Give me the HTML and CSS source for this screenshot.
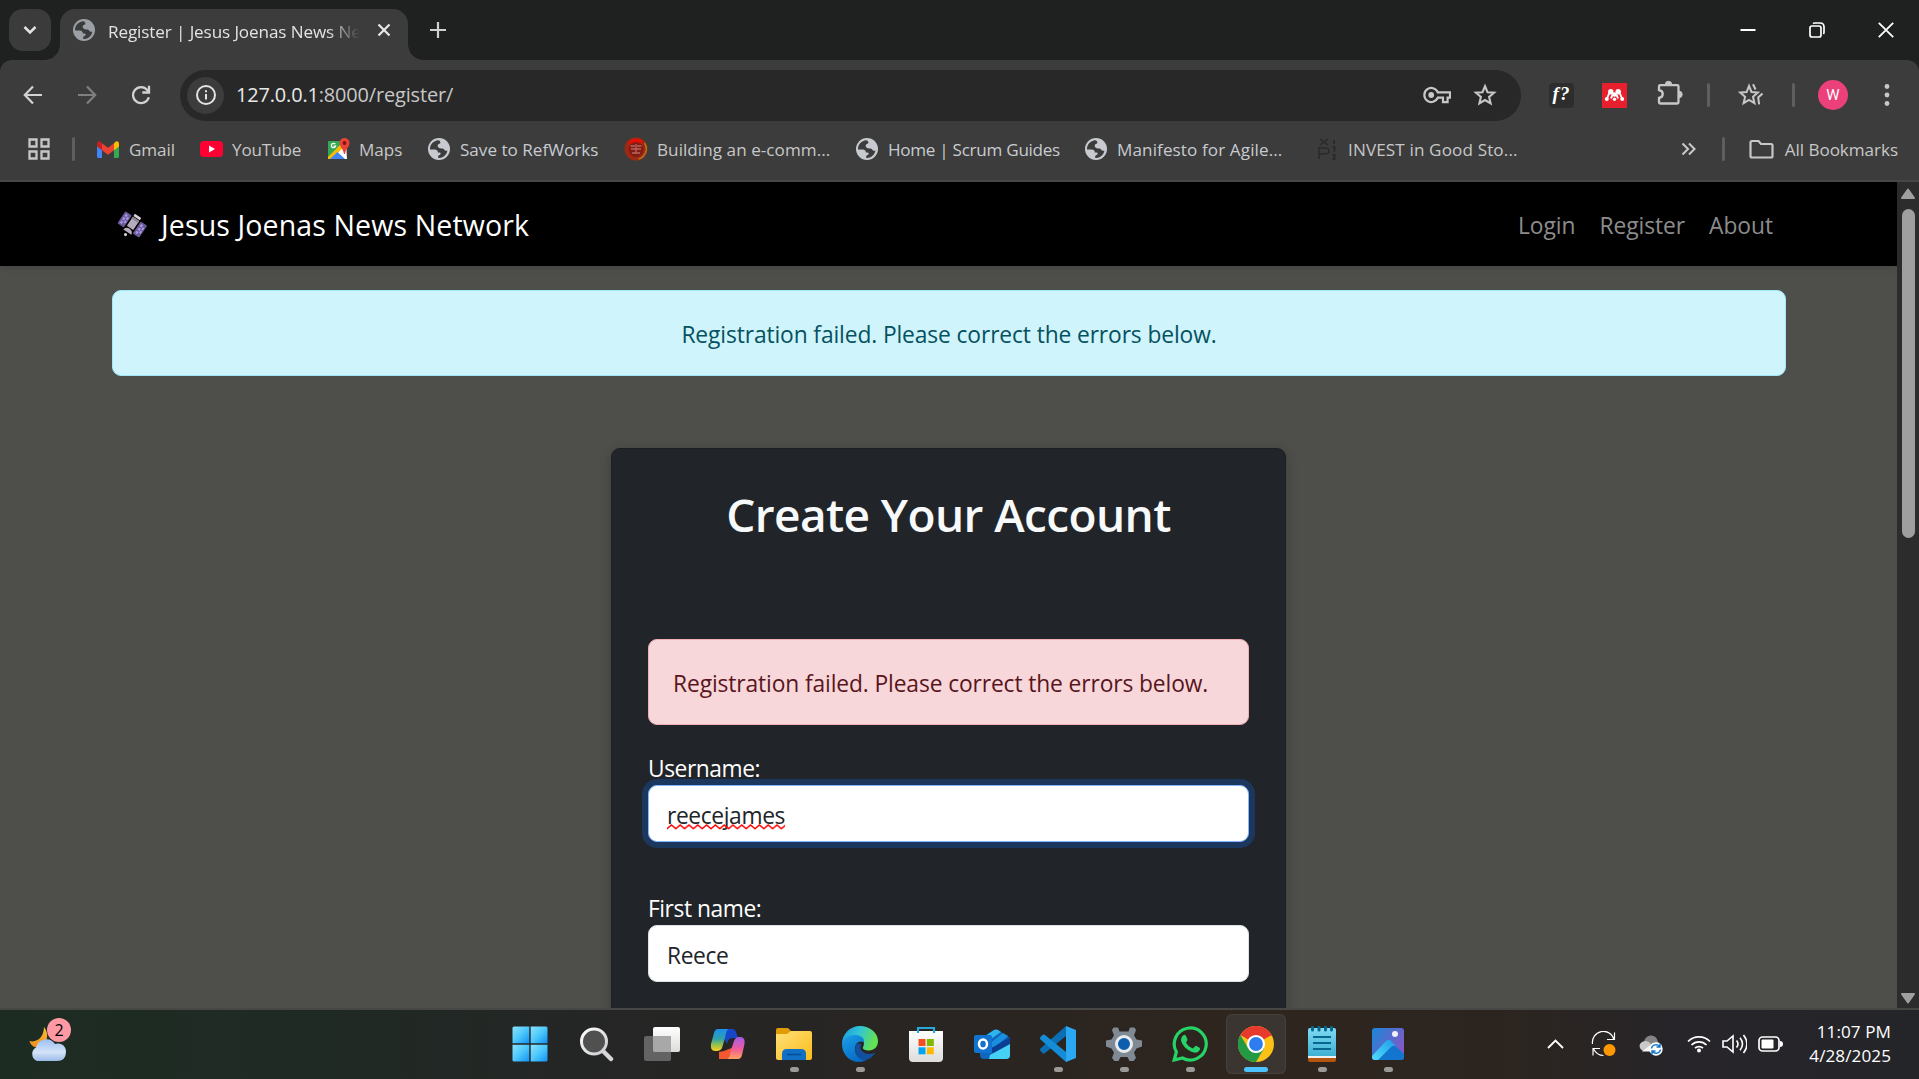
FILE: index.html
```html
<!DOCTYPE html>
<html lang="en">
<head>
<meta charset="utf-8">
<title>Register | Jesus Joenas News Network</title>
<link rel="stylesheet" href="styles.css">
</head>
<body>
<svg class="defs" width="0" height="0" aria-hidden="true">
  <defs>
    <symbol id="globe" viewBox="0 0 22 22">
      <circle cx="11" cy="11" r="11" fill="currentColor"/>
      <path d="M10.2 2.2C5.6 2.6 2 6.4 2 11l0 .6c.9-.2 2.6-.2 4.6-.1 2.300.2 3.400 1.300 3.200 2.900l1.700.1c1.300.2 1.600 1.200.7 2.100-.8.8-1.900.8-2 1.900v1.400c4.300.500 8.600-2.700 9.200-7.400-1.400.6-2.600 0-3.300-1.100-.5-.9-1.200-1-2.500-1-2.900 0-4-1.100-3.900-2.900 0-1.300 1.300-1.800 2.300-2.100.8-.3.200-1.700-.1-2.200-.3-.500-.900-.900-1.700-1z" fill="var(--land)"/>
    </symbol>
    <linearGradient id="win" x1="0" y1="0" x2="1" y2="1"><stop offset="0" stop-color="#8be3ff"/><stop offset=".5" stop-color="#4cc8fb"/><stop offset="1" stop-color="#1191f5"/></linearGradient>
    <linearGradient id="lens" x1="0" y1="0" x2="1" y2="1"><stop offset="0" stop-color="#fff"/><stop offset="1" stop-color="#c9c9cf"/></linearGradient>
    <linearGradient id="copL" x1="0" y1="0" x2="0" y2="1"><stop offset="0" stop-color="#1d8fec"/><stop offset=".45" stop-color="#2fa0ac"/><stop offset=".7" stop-color="#8cc152"/><stop offset="1" stop-color="#ffce1f"/></linearGradient>
    <linearGradient id="copR" x1="0" y1="0" x2="0" y2="1"><stop offset="0" stop-color="#a55be8"/><stop offset=".55" stop-color="#ee5c9c"/><stop offset="1" stop-color="#ffa35c"/></linearGradient>
    <linearGradient id="fold" x1="0" y1="0" x2="1" y2="1"><stop offset="0" stop-color="#ffe07a"/><stop offset="1" stop-color="#fcbc19"/></linearGradient>
    <linearGradient id="edgeTop" x1="0" y1="0" x2="1" y2=".3"><stop offset="0" stop-color="#1796e0"/><stop offset=".5" stop-color="#32c5d5"/><stop offset="1" stop-color="#64e253"/></linearGradient>
    <linearGradient id="edgeLow" x1="0" y1="0" x2=".6" y2="1"><stop offset="0" stop-color="#1ba0e8"/><stop offset="1" stop-color="#0669c4"/></linearGradient>
    <linearGradient id="bag" x1="0" y1="0" x2="0" y2="1"><stop offset="0" stop-color="#fff"/><stop offset="1" stop-color="#dcdcdc"/></linearGradient>
    <linearGradient id="note" x1="0" y1="0" x2="0" y2="1"><stop offset="0" stop-color="#7fdbf3"/><stop offset="1" stop-color="#3fb0d3"/></linearGradient>
    <linearGradient id="sky" x1="0" y1="0" x2="1" y2=".6"><stop offset="0" stop-color="#1a86da"/><stop offset="1" stop-color="#8259c4"/></linearGradient>
    <linearGradient id="hill" x1="0" y1="1" x2="1" y2="0"><stop offset="0" stop-color="#53dcf9"/><stop offset="1" stop-color="#1c9ceb"/></linearGradient>
    <linearGradient id="cloud" x1="0" y1="0" x2="0" y2="1"><stop offset="0" stop-color="#9dc0f5"/><stop offset=".6" stop-color="#d3e3f8"/><stop offset="1" stop-color="#9bbbe9"/></linearGradient>
    <linearGradient id="moon" x1="0" y1="0" x2="0" y2="1"><stop offset="0" stop-color="#fbc531"/><stop offset="1" stop-color="#f08a1c"/></linearGradient>
  </defs>
</svg>

<div class="screen">
  <header class="browser">
    <div class="tabstrip">
      <button class="tab-search" aria-label="Search tabs"><svg width="16" height="12" viewBox="0 0 16 12"><path d="M2.500 3l5.500 5.500L13.500 3" fill="none" stroke="#e3e3e3" stroke-width="2.500"/></svg></button>
      <div class="tab">
        <svg class="tab-globe" width="22" height="22"><use href="#globe"/></svg>
        <span class="tab-title">Register | Jesus Joenas News Network</span>
        <svg class="tab-close" width="14" height="14" viewBox="0 0 14 14"><path d="M1.500 1.500l11 11M12.500 1.500l-11 11" stroke="#e8e8e8" stroke-width="2.200"/></svg>
      </div>
      <svg class="new-tab" width="16" height="16" viewBox="0 0 16 16"><path d="M8 0v16M0 8h16" stroke="#d0d0d0" stroke-width="2.200"/></svg>
      <div class="window-buttons">
        <svg width="16" height="16" viewBox="0 0 16 16"><path d="M.5 8h15" stroke="#fff" stroke-width="2"/></svg>
        <svg width="16" height="16" viewBox="0 0 16 16" fill="none" stroke="#fff" stroke-width="1.700"><rect x="1" y="4" width="11" height="11" rx="2"/><path d="M4 1.500Q4.600 1 6 1h5q4 0 4 4v5q0 1.400-.6 2"/></svg>
        <svg width="16" height="16" viewBox="0 0 16 16"><path d="M.8.8l14.400 14.400M15.200.8L.8 15.200" stroke="#fff" stroke-width="1.800"/></svg>
      </div>
    </div>

    <div class="toolbar">
      <div class="nav-buttons">
        <svg width="20" height="20" viewBox="0 0 20 20" fill="none" stroke="#d2d2d2" stroke-width="2.200"><path d="M19 10H2M10 1.500L1.800 10l8.200 8.500"/></svg>
        <svg width="20" height="20" viewBox="0 0 20 20" fill="none" stroke="#7f7f7f" stroke-width="2.200"><path d="M1 10h17M10 1.500l8.200 8.500-8.200 8.500"/></svg>
        <svg width="20" height="20" viewBox="0 0 20 20" fill="none" stroke="#d2d2d2" stroke-width="2.300"><path d="M17.800 12.200A8 8 0 1 1 16.300 5L18 7.300"/><path d="M18 .8v6.700h-6.700"/></svg>
      </div>
      <div class="omnibox">
        <span class="site-info"><svg width="20" height="20" viewBox="0 0 20 20" fill="none" stroke="#e3e3e3" stroke-width="2"><circle cx="10" cy="10" r="9"/><path d="M10 9v5.500M10 5.300v2"/></svg></span>
        <span class="url"><b>127.0.0.1</b>:8000/register/</span>
        <svg class="key" width="28" height="18" viewBox="0 0 28 18" fill="none" stroke="#c7c7c7" stroke-width="2.200"><path d="M14.800 6.300A7 7 0 1 0 14.800 11.700H20v4.500h4.600v-4.500H27V6.300z"/><circle cx="8.200" cy="9" r="2.900" fill="#c7c7c7" stroke="none"/></svg>
        <svg width="24" height="24" viewBox="0 0 24 24" fill="none" stroke="#c7c7c7" stroke-width="2.100"><path d="M12 3.200l2.500 6 6.600.5-5 4.300 1.500 6.400L12 17l-5.600 3.400L7.900 14l-5-4.300 6.600-.5z"/></svg>
      </div>
      <div class="extensions">
        <span class="ext-f">f?</span>
        <svg class="ext-red" width="25" height="25" viewBox="0 0 25 25"><path fill="#e8202e" d="M0 0h25v25H0z"/><g fill="#fff"><circle cx="8.800" cy="8.800" r="2.700"/><circle cx="16.200" cy="8.800" r="2.700"/><circle cx="12.500" cy="11.500" r="2.200"/><circle cx="4.800" cy="16" r="2"/><circle cx="12.500" cy="16.300" r="1.700"/><circle cx="20.200" cy="16" r="2"/></g><path d="M4.800 16l2.700-6.500M20.200 16l-2.700-6.500M9 15.500l1.500-4M16 15.500l-1.500-4" stroke="#fff" stroke-width="1.900"/></svg>
        <svg class="ext-puzzle" width="26" height="26" viewBox="0 0 26 26"><path d="M4 5.200h16.200q1.300 0 1.300 1.300v15.700q0 1.300-1.300 1.300H3.300q-1.300 0-1.300-1.300V18c5-1 5-7 0-8V6.500q0-1.300 1.300-1.300z" fill="none" stroke="#c7c7c7" stroke-width="2.300"/><path d="M8.300 4.500a3.200 3.200 0 0 1 6.400 0zM22 11.200a3.200 3.200 0 0 1 0 6.400z" fill="#c7c7c7" stroke="#c7c7c7"/></svg>
        <i class="sep"></i>
        <svg class="fav-star" width="28" height="26" viewBox="0 0 28 26" fill="none" stroke="#c7c7c7" stroke-width="2"><path d="M12 4l2.500 6 6.300.6-4.800 4.200 1.500 6.400L12 18l-5.400 3.200 1.500-6.400-4.900-4.200 6.400-.6z"/><path d="M16 2.200l2.600 5.300M25.500 11.500l-4.300 4 .9 6.800"/></svg>
        <i class="sep"></i>
        <span class="avatar">W</span>
        <svg class="menu-dots" width="6" height="26" viewBox="0 0 6 26" fill="#c7c7c7"><circle cx="3" cy="4.500" r="2.400"/><circle cx="3" cy="13" r="2.400"/><circle cx="3" cy="21.500" r="2.400"/></svg>
      </div>
    </div>

    <nav class="bookmarks">
      <svg width="22" height="22" viewBox="0 0 22 22" fill="none" stroke="#c7c7c7" stroke-width="2.300"><path d="M1.500 1.500h7v7h-7zM13.500 1.500h7v7h-7zM1.500 13.500h7v7h-7zM13.500 13.500h7v7h-7z"/></svg>
      <i class="sep"></i>
      <span class="bm gmail"><svg width="22" height="17" viewBox="0 0 22 17"><path fill="#4285f4" d="M0 3h5v14H1.500Q0 17 0 15.500z"/><path fill="#34a853" d="M17 3h5v12.500q0 1.500-1.500 1.500H17z"/><path fill="#fbbc04" d="M17 2.200Q19-.5 21 .6q1 .6 1 2.400v2.500l-5 3.800z"/><path fill="#c5221f" d="M0 5.500V3Q0 1.200 1 .6 3-.5 5 2.200v7.100z"/><path fill="#ea4335" d="M5 9.300V2.200l6 4.600 6-4.600v7.100l-6 4.500z"/></svg><span>Gmail</span></span>
      <span class="bm youtube"><svg width="23" height="16" viewBox="0 0 23 16"><rect width="23" height="16" rx="4" fill="#ff0033"/><path fill="#fff" d="M9 4.500l6 3.500-6 3.500z"/></svg><span>YouTube</span></span>
      <span class="bm maps"><svg width="23" height="22" viewBox="0 0 23 22"><path fill="#34a853" d="M1 3h19v10L8 21H1z"/><path fill="#fff" d="M2 21L19 5l1 16z"/><path fill="#fbbc04" d="M1 19L14 6l3 3L4 21H1z"/><path fill="#4285f4" d="M3 21l7.500-7 7.500 7z"/><path d="M8.300 6.200a2.200 2.200 0 1 0 .3 2H6.500" fill="none" stroke="#fff" stroke-width="1.200"/><path fill="#ea4335" d="M17.500 0a5 5 0 0 1 5 5c0 4-3.500 5-4.500 11h-1c-1-6-4.500-7-4.500-11a5 5 0 0 1 5-5z"/><circle cx="17.500" cy="5" r="1.900" fill="#811411"/></svg><span>Maps</span></span>
      <span class="bm refworks"><svg width="22" height="22"><use href="#globe"/></svg><span>Save to RefWorks</span></span>
      <span class="bm building"><svg width="24" height="24" viewBox="0 0 24 24"><circle cx="12" cy="12" r="11.500" fill="#9c2a12"/><path d="M3.500 6a10.500 10.500 0 0 1 16-1.500L12 9z" fill="#e01208"/><path d="M20.500 6a10.500 10.500 0 0 1-6 16" fill="none" stroke="#b8741c" stroke-width="1.500"/><circle cx="12" cy="12.500" r="7.500" fill="#861a14"/><path d="M6.500 9h4.500M13 9h4.500M7 12h10M8 16h8M12 7v9" stroke="#b5685e" stroke-width="1.300"/></svg><span>Building an e-comm...</span></span>
      <span class="bm scrum"><svg width="22" height="22"><use href="#globe"/></svg><span>Home | Scrum Guides</span></span>
      <span class="bm manifesto"><svg width="22" height="22"><use href="#globe"/></svg><span>Manifesto for Agile...</span></span>
      <span class="bm invest"><svg width="18" height="22" viewBox="0 0 18 22" fill="none" stroke="#2a2a2a" stroke-width="1.500"><path d="M2 1l8 6M10 1L2 7M1 9v12M1 10h6q4 0 4 3t-4 3H1"/><path d="M16 2v4M14.500 9h2v5M14.500 17h2v4h-2" stroke-width="2"/></svg><span>INVEST in Good Sto...</span></span>
      <svg class="more" width="15" height="14" viewBox="0 0 15 14" fill="none" stroke="#c7c7c7" stroke-width="2.100"><path d="M1.500 1.500L7 7l-5.500 5.500M8 1.500L13.500 7 8 12.500"/></svg>
      <i class="sep"></i>
      <span class="bm all"><svg width="25" height="20" viewBox="0 0 25 20" fill="none" stroke="#c7c7c7" stroke-width="2.200"><path d="M3 2h6.500l2.500 3h10q1.500 0 1.500 1.500v10.500q0 1.500-1.500 1.500H3Q1.500 18.500 1.500 17V3.500Q1.500 2 3 2z"/></svg><span>All Bookmarks</span></span>
    </nav>
  </header>

  <div class="viewport">
    <div class="page">
      <nav class="navbar">
        <svg class="satellite" width="32" height="30" viewBox="0 0 32 30">
          <g transform="translate(1.500 1) rotate(34 16 15) scale(.9)">
            <rect x="1.500" y="6.500" width="8.500" height="16" rx="1" fill="#6c5a96"/><rect x="22" y="6.500" width="8.500" height="16" rx="1" fill="#6c5a96"/>
            <g fill="#a695e8"><path d="M3.500 8.500H6v3H3.500zM3.500 13H6v3H3.500zM3.500 17.500H6v3H3.500zM6.700 10.500H9v3H6.700zM6.700 15H9v3H6.700zM24 8.500h2.500v3H24zM24 13h2.500v3H24zM24 17.500h2.500v3H24zM27.200 10.500h2.300v3h-2.300zM27.200 15h2.300v3h-2.300z"/></g>
            <path fill="#b5acbb" d="M11.800 7h8.500v12h-8.500z"/><path fill="#d8d1dc" d="M11.800 3h8.500v3h-8.500z"/><path fill="#8f8598" d="M11.800 7h8.500v2.500h-8.500z"/>
            <path fill="#b5acbb" d="M11 24.500a5.200 4.500 0 0 1 10.400 0z"/><circle cx="16" cy="28" r="1.700" fill="#d8d1dc"/>
          </g>
        </svg>
        <a class="brand">Jesus Joenas News Network</a>
        <div class="links"><a>Login</a><a>Register</a><a>About</a></div>
      </nav>
      <main class="container">
        <div class="alert alert-info">Registration failed. Please correct the errors below.</div>
        <section class="card">
          <h1>Create Your Account</h1>
          <div class="alert alert-danger">Registration failed. Please correct the errors below.</div>
          <div class="field"><label>Username:</label><div class="input focused"><span class="misspelt">reecejames<svg class="squiggle" width="118" height="6"><defs><pattern id="wave" width="8.800" height="6" patternUnits="userSpaceOnUse"><path d="M-1 5.600L0 4.700 4.400 1l4.400 3.700 1 .9" fill="none" stroke="#f00" stroke-width="1.500"/></pattern></defs><rect width="118" height="6" fill="url(#wave)"/></svg></span></div></div>
          <div class="field"><label>First name:</label><div class="input">Reece</div></div>
        </section>
      </main>
    </div>
    <div class="scrollbar">
      <svg width="16" height="12" viewBox="0 0 16 12"><path d="M8 1.500L14 10H2z" fill="#9f9f9f" stroke="#9f9f9f" stroke-width="2" stroke-linejoin="round"/></svg>
      <div class="thumb"></div>
      <svg class="down" width="16" height="12" viewBox="0 0 16 12"><path d="M8 10.500L14 2H2z" fill="#9f9f9f" stroke="#9f9f9f" stroke-width="2" stroke-linejoin="round"/></svg>
    </div>
  </div>

  <footer class="taskbar">
    <div class="weather">
      <svg width="38" height="38" viewBox="0 0 38 38"><path d="M15 2c5 6 4 15-2 19-5 3-11 1-12.500-5C8 18 15 12 15 2z" fill="url(#moon)"/><path d="M8 36a7.500 7.500 0 0 1-1-13.500A10.500 10.500 0 0 1 26 19a8 8 0 0 1 11 7.500q0 9.500-9 9.500z" fill="url(#cloud)"/></svg>
      <span class="count">2</span>
    </div>
    <div class="apps">
      <span class="app"><svg width="36" height="36" viewBox="0 0 36 36"><g fill="url(#win)"><path d="M2 .5h15.300v16.800H.5V2Q.5.500 2 .5z"/><path d="M18.700.5H34q1.500 0 1.500 1.500v15.300H18.700z"/><path d="M.5 18.700h16.800v16.800H2Q.5 35.500.5 34z"/><path d="M18.700 18.700h16.800V34q0 1.500-1.500 1.500H18.700z"/></g></svg></span>
      <span class="app"><svg width="36" height="36" viewBox="0 0 36 36"><path d="M25 25l8 8" stroke="#d5d5da" stroke-width="4.500" stroke-linecap="round"/><circle cx="16" cy="15.500" r="12.500" fill="#505050" stroke="url(#lens)" stroke-width="3"/></svg></span>
      <span class="app"><svg width="36" height="36" viewBox="0 0 36 36"><rect x="9" y="1" width="27" height="25" rx="2" fill="url(#bag)"/><rect x="0" y="10" width="27" height="25" rx="2" fill="#6f6f6f" fill-opacity=".85"/><path d="M9 10h18v16H11q-2 0-2-2z" fill="#a8a8a8"/></svg></span>
      <span class="app"><svg width="36" height="36" viewBox="0 0 36 36"><path d="M9 3h13q3 0 4 3l2 6h-4c-5 0-6 2-7 6z" fill="#1747c9"/><path d="M9 33h14q3 0 4-3l-3-9-10 4-5 1z" fill="#f4582f"/><path d="M8 3h11c-3 1-3 5-4 9l-3 10q-1.500 3-5 3H5q-5 0-4-7L4 7q1-4 4-4z" fill="url(#copL)"/><path d="M28 33H17c3-1 3-5 4-9l3-9q1.500-4 5-4h2q4.500 1 3.500 7L32 29q-1 4-4 4z" fill="url(#copR)"/></svg></span>
      <span class="app"><svg width="36" height="36" viewBox="0 0 36 36"><path d="M0 4q0-2 2-2h10l4 4-4 6H0z" fill="#e09b06"/><path d="M0 8h11l4-3h19q2 0 2 2v25q0 2-2 2H2q-2 0-2-2z" fill="url(#fold)"/><path d="M6 34V28q0-5 5-5h14q5 0 5 5v6z" fill="#0f70c5"/><path d="M11 28.500h14" stroke="#064f96" stroke-width="1.700"/></svg><i class="dot"></i></span>
      <span class="app"><svg width="36" height="36" viewBox="0 0 36 36"><path d="M18 0c10 0 18 7 18 15 0 6-4 9.500-9 9.500-4 0-7-1.500-6-3.500 3-5-1-10-7-10C8 11 3 14 0 18 0 8 8 0 18 0z" fill="url(#edgeTop)"/><path d="M13 9c6-.5 10 4 9 7-5-2-9 1-9 7 0 8 7 12 13 10-3 2-6 3-9 3C7 36 0 28 0 18 2 12 7 9 13 9z" fill="url(#edgeLow)"/><path d="M14.500 18c-4 8 2 18 11 15.500 3-1 6-4 8-7-4 2-10 2-13-1-2-2-3-4-1-7-1-1-3-1.500-5-.5z" fill="#10509f"/></svg><i class="dot"></i></span>
      <span class="app"><svg width="36" height="36" viewBox="0 0 36 36"><path d="M1 5h34v27q0 4-4 4H5q-4 0-4-4z" fill="url(#bag)"/><path d="M10 7V2h16v5" fill="none" stroke="#27a8dc" stroke-width="2.200"/><path fill="#f25022" d="M10.500 13h7v7h-7z"/><path fill="#7fba00" d="M18.800 13h7v7h-7z"/><path fill="#00a4ef" d="M10.500 21.300h7v7h-7z"/><path fill="#ffb900" d="M18.800 21.300h7v7h-7z"/></svg></span>
      <span class="app"><svg width="36" height="36" viewBox="0 0 36 36"><path d="M6 13L20 4q2-1 4 0l12 8v17q0 4-4 4H10q-4 0-4-4z" fill="#1066bd"/><path d="M8 12L20 4q2-1 4 0l3 2-13 9z" fill="#2db4ea"/><path d="M14 19L29 7l5 3-14 12z" fill="#1a8fe0"/><path d="M16 23l20-12v8L20 29z" fill="#0a3f94"/><path d="M15 33l1-4 20-11v11q0 4-4 4z" fill="#45d0f5"/><rect y="9" width="18" height="18" rx="2" fill="#1173cf"/><ellipse cx="9" cy="18" rx="4" ry="4.600" fill="none" stroke="#fff" stroke-width="2.500"/></svg></span>
      <span class="app"><svg width="36" height="36" viewBox="0 0 36 36"><path d="M26 0L36 4v28l-10 4z" fill="#2aa9f2"/><path d="M26 0v10L5 27q-1.500 1-2.600 0L.5 25q-1-1.500 0-2.500z" fill="#0a6fb5"/><path d="M26 36V26L5 9Q3.500 8 2.400 9L.5 11q-1 1.500 0 2.500z" fill="#148cd6"/></svg><i class="dot"></i></span>
      <span class="app"><svg width="36" height="36" viewBox="0 0 36 36"><path d="M13.500 5.500L12 1.500H7.500L6 4l2 5.500-2.500 4L0 14.500v6l5.500 2 2.500 4L6 32l2.500 3h4l2-4h7l2 4h4l2.500-3-2-5.500 2.500-4 5.500-2v-6l-5.500-1-2.500-4L30 4l-1.500-2.500H24l-1.500 4z" fill="#7f8a94"/><circle cx="18" cy="18" r="7.500" fill="#0d5fae" stroke="#e9ebee" stroke-width="3"/></svg><i class="dot"></i></span>
      <span class="app"><svg width="36" height="36" viewBox="0 0 36 36"><path d="M2.200 34l2.200-8A16 16 0 1 1 10.500 32z" fill="none" stroke="#25d366" stroke-width="3.200"/><path d="M11 9.500q2-1.500 3 .5l1.500 3.500q0 1-1.500 3 2.500 4.500 7 6l2-2.200q.7-.7 1.600-.2l3 1.600q.8.5.4 1.600-1.600 4-6 3.200C15 25 9.500 18.500 9 14q0-3 2-4.500z" fill="#25d366"/></svg><i class="dot"></i></span>
      <span class="app active"><svg width="36" height="36" viewBox="0 0 36 36"><circle cx="18" cy="18" r="18" fill="#fbc116"/><path d="M18 18L2.400 9A18 18 0 0 1 33.600 9z" fill="#e8392e"/><path d="M18 18v18A18 18 0 0 1 2.400 9l8 13.500z" fill="#249a45"/><path d="M18 36l8-13.500L18 18l-7.800 4.500z" fill="#249a45"/><path d="M18 9h15.600v1H18z" fill="#e8392e"/><circle cx="18" cy="18" r="8" fill="#2d7cf0" stroke="#fff" stroke-width="2.200"/></svg><i class="dot"></i></span>
      <span class="app"><svg width="36" height="36" viewBox="0 0 36 36"><path d="M4 30h28v4q0 2-2 2H6q-2 0-2-2z" fill="#b4560f"/><path d="M4 28h28v4H4z" fill="#f0f0f0"/><path d="M4 4q0-2 2-2h24q2 0 2 2v26H4z" fill="url(#note)"/><path d="M9 11h18M9 17h18M9 23h18" stroke="#06668e" stroke-width="1.900"/><path d="M8.500 1v3M15 1v3M21.500 1v3M27.500 1v3" stroke="#06668e" stroke-width="3" stroke-linecap="round"/></svg><i class="dot"></i></span>
      <span class="app"><svg width="36" height="36" viewBox="0 0 36 36"><rect x="2" y="2" width="32" height="32" rx="3" fill="url(#sky)"/><path d="M3 33l15-16q2-2 4 0l12 11v3q0 3-3 3H5q-1.500 0-2-1z" fill="#1276cf"/><path d="M2 30L16 15q2.500-2.500 5 0l5 5q-3-1-5 1L8 34H5q-3 0-3-3z" fill="url(#hill)"/><circle cx="25" cy="8" r="3" fill="#f0f0fa"/></svg><i class="dot"></i></span>
    </div>
    <div class="tray">
      <svg width="17" height="10" viewBox="0 0 17 10"><path d="M1 9l7.500-7.500L16 9" fill="none" stroke="#fff" stroke-width="1.800"/></svg>
      <svg class="sync" width="26" height="26" viewBox="0 0 26 26" fill="none" stroke="#fff" stroke-width="1.200"><path d="M1.500 13A11 11 0 0 1 23 8.500M23.500 1.500V8.500H16M2 24.500v-7H9M2.500 18q3.500 6.500 10 6.500"/><circle cx="18.500" cy="19" r="6" fill="#ff9800" stroke="none"/></svg>
      <svg class="onedrive" width="26" height="24" viewBox="0 0 26 24"><path d="M6 9a7 7 0 0 1 14-1q3 1 3 5l-10 3z" fill="#858585"/><path d="M5 17a5 5 0 0 1-1-9q5-3 9 2l-5 7z" fill="#c9c9c9"/><path d="M4 17.500L15 9q5 0 5 5v3.500z" fill="#f5f5f5"/><circle cx="18" cy="15" r="6.700" fill="#fff"/><path d="M13.500 14.500a4.500 4.500 0 0 1 8-2M22.500 15.500a4.500 4.500 0 0 1-8 2M22 9.500v3.500h-3.500M14 20.500V17h3.500" fill="none" stroke="#1677cf" stroke-width="1.500"/></svg>
      <svg class="wifi" width="24" height="18" viewBox="0 0 24 18" fill="none" stroke="#fff" stroke-width="1.700"><path d="M1 6.500a15.500 15.500 0 0 1 22 0M4.500 10a10.500 10.500 0 0 1 15 0M8 13.200a5.700 5.700 0 0 1 8 0"/><circle cx="12" cy="15.500" r="2" fill="#fff" stroke="none"/></svg>
      <svg class="volume" width="25" height="20" viewBox="0 0 25 20" fill="none" stroke="#fff" stroke-width="1.600"><path d="M1 7h4l6-5v16l-6-5H1zM14.500 6.500q3 3.500 0 7M18 3.800q5 6.200 0 12.400M21.500 1q7 9 0 18"/></svg>
      <svg class="battery" width="25" height="16" viewBox="0 0 25 16"><rect x="1" y="1" width="20" height="14" rx="3.500" fill="none" stroke="#fff" stroke-width="1.700"/><rect x="3.500" y="3.500" width="12" height="9" rx="1" fill="#fff"/><path d="M22 5q3 0 3 3t-3 3z" fill="#fff"/></svg>
      <div class="clock"><span>11:07 PM</span><span>4/28/2025</span></div>
    </div>
  </footer>
</div>
</body>
</html>
```

FILE: styles.css
```css
* { box-sizing: border-box; }
body { margin: 0; font-family: "Open Sans", "Noto Sans", sans-serif; overflow: hidden; }
svg { display: block; flex: none; }
.defs { position: absolute; }
.screen { display: flex; flex-direction: column; width: 1919px; height: 1079px; background: #1f2120; }

/* Browser frame */
.browser { flex: none; height: 182px; }
.tabstrip { display: flex; height: 60px; padding: 9px 25px 0 9px; }
.tab-search { display: grid; place-items: center; width: 42px; height: 42px; padding: 0; border: 0; border-radius: 14px; background: #3a3b3a; }
.tab { position: relative; display: flex; align-items: center; width: 348px; margin-left: 9px; padding: 0 17px 9px 13px; border-radius: 15px 15px 0 0; background: #3c3c3c; }
.tab::before, .tab::after { content: ""; position: absolute; bottom: 0; width: 15px; height: 15px; }
.tab::before { left: -15px; background: radial-gradient(circle at 0 0, transparent 14.5px, #3c3c3c 15px); }
.tab::after { right: -15px; background: radial-gradient(circle at 100% 0, transparent 14.5px, #3c3c3c 15px); }
.tab-globe { color: #9aa0a6; --land: #3c3c3c; }
.tab-title { width: 252px; margin: 4px 17px 0 13px; overflow: hidden; white-space: nowrap; color: #e3e3e3; font-size: 17.1px; line-height: 26px; letter-spacing: -.11px; -webkit-mask-image: linear-gradient(90deg, #000 220px, transparent 252px); mask-image: linear-gradient(90deg, #000 220px, transparent 252px); }
.new-tab { margin: 13px 0 0 22px; }
.window-buttons { display: flex; gap: 53px; margin: 13px 0 0 auto; }

.toolbar { display: flex; align-items: center; height: 70px; padding: 0 29px 0 23px; background: #3c3c3c; border-radius: 12px 12px 0 0; }
.nav-buttons { display: flex; gap: 34px; width: 157px; }
.omnibox { display: flex; align-items: center; flex: 1; height: 51px; padding: 0 24px 0 7px; border-radius: 26px; background: #282828; }
.site-info { display: grid; place-items: center; width: 37px; height: 37px; border-radius: 50%; background: #3c3c3c; }
.url { flex: 1; margin-left: 12px; color: #c7c7c7; font-size: 19.95px; line-height: 28px; letter-spacing: -.15px; }
.url b { font-weight: 400; color: #e8e8e8; }
.key { margin-right: 22px; }
.extensions { display: flex; align-items: center; width: 369px; padding-left: 28px; }
.ext-f { width: 25px; height: 25px; border-radius: 4px; background: #2d2d2d; color: #fff; font: italic bold 19px/22px "Liberation Serif", serif; text-align: center; letter-spacing: 1px; }
.ext-red { margin-left: 28px; }
.ext-puzzle { margin: 0 24px 4px 30px; }
.sep { flex: none; width: 3px; height: 24px; border-radius: 2px; background: #5f5f5f; }
.fav-star { margin: 0 27px 0 27px; }
.avatar { width: 30px; height: 30px; margin: 0 0 0 23px; border-radius: 50%; background: #ec407a; color: #fff; font: 15px/30px Roboto, sans-serif; text-align: center; }
.menu-dots { margin-left: auto; }

.bookmarks { display: flex; align-items: center; height: 52px; padding: 0 21px 12px 28px; background: #3c3c3c; border-bottom: 2px solid #474747; color: #c7c7c7; font-size: 17.1px; line-height: 26px; }
.bookmarks > .sep { margin-left: 22px; }
.bm { display: flex; align-items: center; gap: 10px; white-space: nowrap; flex: none; }
.bm > span { padding-top: 2px; }
.gmail { width: 103px; margin-left: 22px; letter-spacing: -.1px; }
.youtube { width: 127px; gap: 9px; letter-spacing: -.15px; }
.maps { width: 101px; gap: 9px; }
.refworks { width: 196px; }
.building { width: 232px; gap: 9px; letter-spacing: .05px; }
.scrum { width: 229px; letter-spacing: -.28px; }
.manifesto { width: 233px; letter-spacing: .1px; }
.invest { width: 200px; gap: 12px; letter-spacing: .13px; }
.refworks, .scrum, .manifesto { color: #c7cbd0; --land: #3c3c3c; }
.more { margin-left: auto; margin-right: 4px; }
.all { margin-left: 24px; gap: 11px; letter-spacing: -.05px; }

/* Page */
.viewport { flex: none; display: flex; height: 826px; overflow: hidden; }
.page { flex: 1; background: #4e4e4b; font-size: 22.8px; line-height: 36px; }
.navbar { position: relative; display: flex; align-items: center; height: 84px; padding: 2px 124px 0 115px; background: #000; box-shadow: 0 3px 6px rgba(0, 0, 0, .1); }
.brand { margin: 0 auto 0 14px; color: #fff; font-size: 28.5px; letter-spacing: .13px; }
.satellite { margin-top: 2px; }
.links { display: flex; gap: 24px; padding-top: 2px; color: #8c8c8c; letter-spacing: -.06px; }
.container { width: 1674px; margin: 24px 0 0 112px; }
.alert { height: 86px; padding: 26px 24px 0; border: 1px solid; border-radius: 9px; letter-spacing: -.12px; white-space: nowrap; }
.alert-info { background: #cff4fc; border-color: #9eeaf9; color: #055160; text-align: center; }
.alert-danger { background: #f8d7da; border-color: #f1aeb5; color: #58151c; }
.card { width: 675px; height: 700px; margin: 72px 0 0 499px; padding: 32px 36px 0; border: 1px solid #1c1f23; border-radius: 9px; background: #212529; color: #fff; box-shadow: 0 3px 12px rgba(0, 0, 0, .22); }
h1 { margin: 0 0 92px; color: #f8f9fa; font-size: 46px; line-height: 66px; font-weight: 600; letter-spacing: -.6px; text-align: center; }
.field { margin-top: 26px; height: 140px; }
.field + .field { margin-top: 0; }
label { display: block; height: 34px; letter-spacing: -.45px; line-height: 36px; }
.input { height: 57px; padding: 12px 18px; border: 1px solid #dee2e6; border-radius: 9px; background: #fff; color: #212529; letter-spacing: -.38px; line-height: 36px; }
.focused { border-color: #86b7fe; box-shadow: 0 0 0 6px #1c375e; }
.misspelt { position: relative; }
.squiggle { position: absolute; left: 0; bottom: 1px; }

.scrollbar { display: flex; flex-direction: column; align-items: center; width: 22px; padding: 6px 0 4px; background: #2c2c2c; }
.thumb { width: 13px; height: 329px; margin: 9px 0 auto; border-radius: 7px; background: #9f9f9f; }

/* Taskbar */
.taskbar { display: flex; flex: none; height: 71px; border-top: 2px solid #464644; background: linear-gradient(90deg, #1d2c22 0, #1f2a24 15%, #242625 30%, #282523 45%, #2e251e 65%, #2c251f 78%, #27252a 88%, #242529 100%); }
.weather { position: relative; width: 500px; padding: 15px 0 0 29px; }
.count { position: absolute; left: 47px; top: 8px; width: 24px; height: 24px; border-radius: 50%; background: #ff99a4; color: #000; font-size: 16px; line-height: 24px; text-align: center; }
.apps { display: flex; gap: 6px; }
.app { display: flex; flex-direction: column; align-items: center; gap: 5px; width: 60px; height: 60px; margin-top: 4px; padding-top: 12px; border-radius: 6px; }
.dot { width: 9px; height: 5px; border-radius: 3px; background: #9c9a98; }
.active { background: #3a3531; box-shadow: inset 0 0 0 1px #45403c; }
.active .dot { width: 24px; background: #4cc2ff; }
.tray { display: flex; align-items: center; width: 372px; margin-left: auto; padding-bottom: 2px; }
.sync { margin-left: 27px; }
.onedrive { margin: 5px 0 0 21px; }
.wifi { margin-left: 23px; }
.volume { margin-left: 11px; }
.battery { margin-left: 11px; }
.clock { display: flex; flex-direction: column; align-items: flex-end; flex: 1; padding-right: 28px; color: #fff; font-size: 17.1px; line-height: 24px; letter-spacing: .08px; }
```
